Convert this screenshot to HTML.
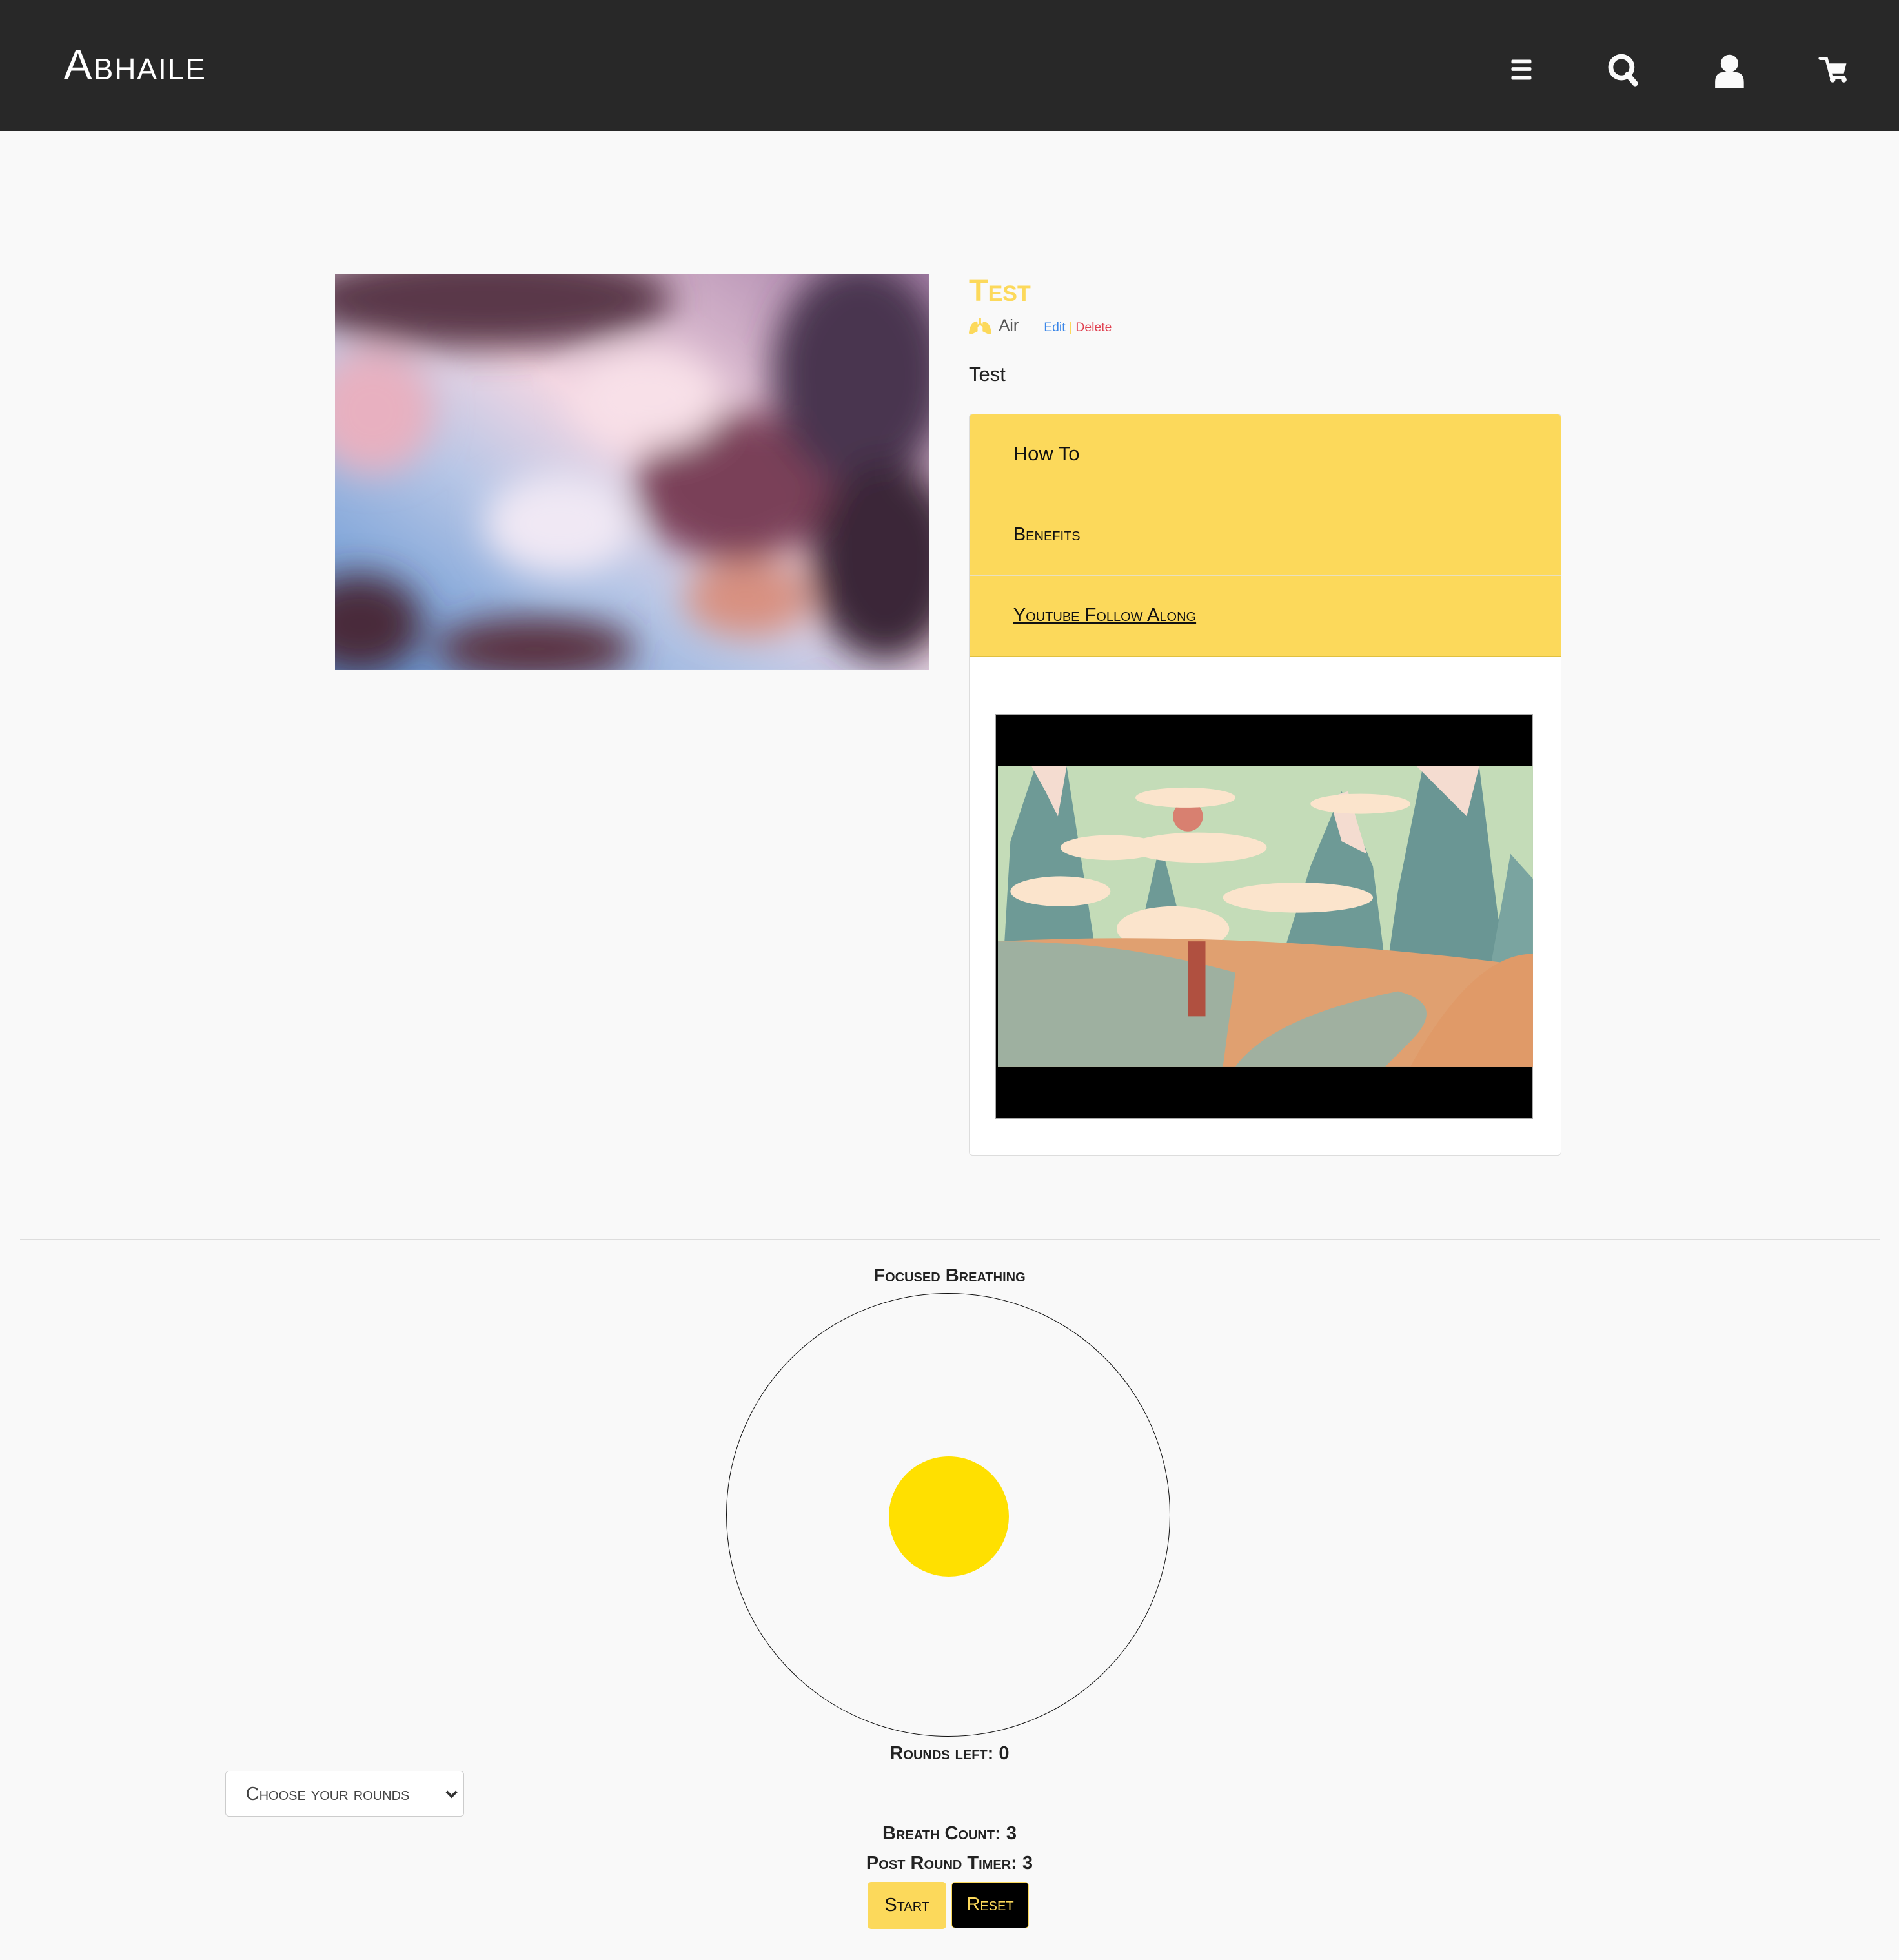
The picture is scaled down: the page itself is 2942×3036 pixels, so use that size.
<!DOCTYPE html>
<html><head><meta charset="utf-8"><style>
html,body{margin:0;padding:0;background:#f9f9f9;overflow:hidden}
body{width:2942px;height:3036px}
#w{zoom:1.93680;width:1519px;height:1568px;position:relative;font-family:"Liberation Sans",sans-serif;font-stretch:condensed}
.a{position:absolute}
.sc{font-variant:small-caps}
</style></head><body><div id="w">
<div class="a" style="left:0;top:0;width:1519px;height:105px;background:#282828"></div>
<div class="a sc" style="left:51px;top:32px;color:#fff;font-size:34px;letter-spacing:1px">Abhaile</div>
<svg class="a" style="left:1200px;top:40px" width="290" height="32" viewBox="0 0 290 32">
<g fill="#fafafa">
<rect x="9" y="8" width="16" height="3" rx="1"/><rect x="9" y="14" width="16" height="3" rx="1"/><rect x="9" y="21" width="16" height="3" rx="1"/>
<circle cx="97" cy="14" r="8.5" fill="none" stroke="#fafafa" stroke-width="4"/>
<path d="M102 20 L108 27" stroke="#fafafa" stroke-width="4.5" stroke-linecap="round"/>
<circle cx="183.5" cy="11" r="7"/>
<path d="M172 31 V26 Q172 18 179 18 H188 Q195 18 195 26 V31 Z"/>
<path d="M256 7 H261 L265 22 H275" stroke="#fafafa" stroke-width="2.5" fill="none" stroke-linecap="round"/>
<path d="M262 11 H277 L275 19 H264 Z"/>
<circle cx="266" cy="24" r="2.2"/><circle cx="275" cy="24" r="2.2"/>
</g></svg>

<svg class="a" style="left:268px;top:219px" width="475" height="317" viewBox="0 0 475 317">
<defs><linearGradient id="s" x1="0" y1="1" x2="1" y2="0"><stop offset="0" stop-color="#5a8fd0"/><stop offset=".35" stop-color="#b7c6e6"/><stop offset=".55" stop-color="#f3d6e2"/><stop offset="1" stop-color="#a680a8"/></linearGradient>
<filter id="b"><feGaussianBlur stdDeviation="14"/></filter></defs>
<rect width="475" height="317" fill="url(#s)"/>
<g filter="url(#b)">
<ellipse cx="120" cy="20" rx="150" ry="40" fill="#5a3848"/>
<ellipse cx="30" cy="110" rx="50" ry="50" fill="#e8b0c0"/>
<ellipse cx="320" cy="170" rx="80" ry="60" fill="#7a4058"/>
<ellipse cx="420" cy="80" rx="70" ry="90" fill="#4a3550"/>
<ellipse cx="440" cy="230" rx="60" ry="80" fill="#3a2838"/>
<ellipse cx="20" cy="280" rx="50" ry="40" fill="#4a2c3a"/>
<ellipse cx="160" cy="300" rx="80" ry="25" fill="#5a3040"/>
<ellipse cx="250" cy="100" rx="60" ry="40" fill="#f8e0e8"/>
<ellipse cx="330" cy="260" rx="50" ry="30" fill="#d89080"/>
<ellipse cx="180" cy="200" rx="60" ry="40" fill="#f0e8f4"/>
</g></svg>

<div class="a sc" style="left:775px;top:218px;color:#fcd95b;font-size:25px;font-weight:bold">Test</div>
<svg class="a" style="left:775px;top:254px" width="18" height="14" viewBox="0 0 18 14"><path d="M9 0V6M9 5L5 8M9 5L13 8" stroke="#fcd95b" stroke-width="1.5" fill="none"/><path d="M6 3Q1 4 0 12Q0 14 3 13L7 11V4Z M12 3Q17 4 18 12Q18 14 15 13L11 11V4Z" fill="#fcd95b"/></svg>
<div class="a" style="left:799px;top:253px;color:#555;font-size:13px">Air</div>
<div class="a" style="left:835px;top:256px;font-size:10px"><span style="color:#3a86e8">Edit</span> <span style="color:#fcd95b">|</span> <span style="color:#e04050">Delete</span></div>
<div class="a" style="left:775px;top:290px;color:#222;font-size:16px">Test</div>

<div class="a" style="left:775px;top:331px;width:473px;height:592px;border:1px solid #ddd;border-radius:3px;background:#fff;overflow:hidden">
<div style="height:64px;background:#fcd95b;border-bottom:1px solid #e8e0c0;position:relative"><span class="a" style="left:35px;top:22px;font-size:16px;color:#111">How To</span></div>
<div style="height:64px;background:#fcd95b;border-bottom:1px solid #e8e0c0;position:relative"><span class="a sc" style="left:35px;top:23px;font-size:15px;color:#111">Benefits</span></div>
<div style="height:64px;background:#fcd95b;border-bottom:1px solid #e0c040;position:relative"><span class="a sc" style="left:35px;top:23px;font-size:15px;color:#111;text-decoration:underline">Youtube Follow Along</span></div>
</div>
<div class="a" style="left:796px;top:571px;width:429px;height:323px;border:1px solid #aaa;background:#000"></div>
<svg class="a" style="left:798px;top:613px" width="428" height="240" viewBox="0 0 428 240" preserveAspectRatio="none">
<rect width="428" height="240" fill="#c4dcb8"/>
<circle cx="152" cy="40" r="12" fill="#d88070"/>
<path d="M0 230 L10 60 L30 0 L55 0 L80 160 L85 240Z" fill="#6e9a96"/>
<path d="M80 240 L110 150 L130 60 L150 140 L165 240Z" fill="#6e9a96"/>
<path d="M200 240 L250 80 L275 20 L300 80 L320 240Z" fill="#6e9a96"/>
<path d="M300 240 L320 100 L340 0 L385 0 L400 120 L428 240Z" fill="#6a9694"/>
<path d="M380 240 L410 70 L428 90 V240Z" fill="#7aa4a0"/>
<path d="M27 0 L55 0 L48 40 L38 20Z M265 25 L280 20 L295 70 L275 60Z M335 0 L385 0 L375 40 L355 20Z" fill="#f4dcd0"/>
<g fill="#fbe4cc"><ellipse cx="50" cy="100" rx="40" ry="12"/><ellipse cx="90" cy="65" rx="40" ry="10"/><ellipse cx="160" cy="65" rx="55" ry="12"/><ellipse cx="150" cy="25" rx="40" ry="8"/><ellipse cx="240" cy="105" rx="60" ry="12"/><ellipse cx="140" cy="130" rx="45" ry="18"/><ellipse cx="290" cy="30" rx="40" ry="8"/></g>
<path d="M0 240 V140 Q200 130 428 160 V240Z" fill="#e0a070"/>
<path d="M0 240 V140 Q100 140 190 165 L180 240Z" fill="#9eb0a0"/>
<path d="M190 240 Q220 200 320 180 Q360 190 330 220 L310 240Z" fill="#a0b0a0"/>
<path d="M330 240 Q380 150 428 150 V240Z" fill="#e09a68"/>
<rect x="152" y="140" width="14" height="60" fill="#b05040"/>
</svg>

<div class="a" style="left:16px;top:991px;width:1488px;height:1px;background:#ddd"></div>
<div class="a sc" style="left:0;width:1519px;top:1012px;text-align:center;font-size:15px;font-weight:bold;color:#222">Focused Breathing</div>
<div class="a" style="left:581px;top:1034px;width:354px;height:354px;border:1px solid #111;border-radius:50%"></div>
<div class="a" style="left:711px;top:1165px;width:96px;height:96px;background:#ffe000;border-radius:50%"></div>
<div class="a sc" style="left:0;width:1519px;top:1394px;text-align:center;font-size:15px;font-weight:bold;color:#222">Rounds left: 0</div>
<div class="a" style="left:180px;top:1416px;width:190px;height:36px;border:1px solid #ccc;border-radius:3px;background:#fff"><span class="a sc" style="left:16px;top:10px;font-size:15px;color:#444">Choose your rounds</span><svg class="a" style="left:176px;top:14px" width="10" height="8" viewBox="0 0 10 8"><path d="M1 2L5 6L9 2" stroke="#333" stroke-width="2" fill="none"/></svg></div>
<div class="a sc" style="left:0;width:1519px;top:1458px;text-align:center;font-size:15px;font-weight:bold;color:#222">Breath Count: 3</div>
<div class="a sc" style="left:0;width:1519px;top:1482px;text-align:center;font-size:15px;font-weight:bold;color:#222">Post Round Timer: 3</div>
<div class="a sc" style="left:694px;top:1505px;width:63px;height:38px;background:#fcd95b;border-radius:3px;text-align:center;line-height:38px;font-size:15px;color:#111">Start</div>
<div class="a sc" style="left:761px;top:1505px;width:61px;height:36px;background:#000;border:1px solid #fcd95b;border-radius:3px;text-align:center;line-height:36px;font-size:15px;color:#fcd95b">Reset</div>
</div></body></html>
